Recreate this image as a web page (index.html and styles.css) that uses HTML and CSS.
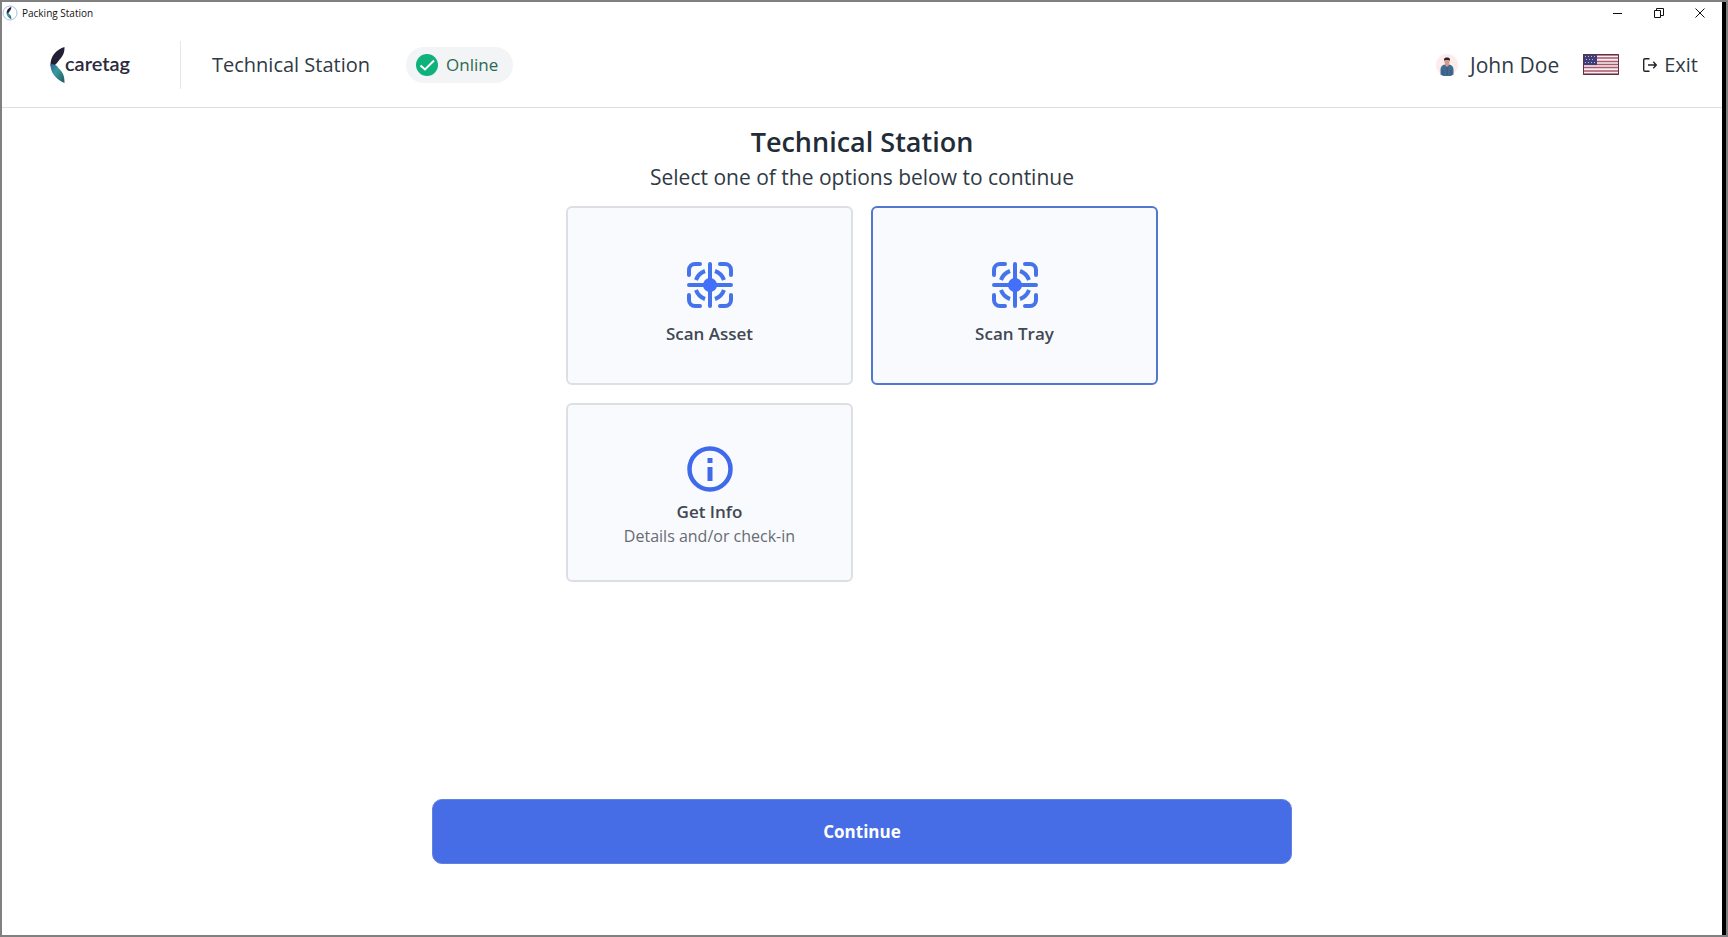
FILE: index.html
```html
<!DOCTYPE html>
<html lang="en">
<head>
    <meta charset="UTF-8">
    <title>Packing Station</title>
    <link rel="stylesheet" href="styles.css">
</head>
<body>
<svg class="defs" aria-hidden="true">
    <defs>
        <linearGradient id="teal" x1="0" y1="0" x2="1" y2="1">
            <stop offset="0" stop-color="#2b5f9e"/>
            <stop offset="0.4" stop-color="#3a9a9c"/>
            <stop offset="1" stop-color="#235a60"/>
        </linearGradient>
        <symbol id="leaf" viewBox="0 0 15 36">
            <path d="M14.500 0C7 2 0 9 .5 19c4 0 6-2 8-5 4-5 6-7 6-14z" fill="#221f35"/>
            <path d="M.5 17c4 0 6 1 8 4 4 4 6 7 6 15C7 33 0 26 .5 17z" fill="url(#teal)"/>
        </symbol>
        <symbol id="scan" viewBox="0 0 46 46">
            <g fill="none" stroke="#4573ea" stroke-width="4" stroke-linecap="round">
                <path d="M2 13V8a6 6 0 0 1 6-6h5M33 2h5a6 6 0 0 1 6 6v5M44 33v5a6 6 0 0 1-6 6h-5M13 44H8a6 6 0 0 1-6-6v-5"/>
                <path d="M23 2v42M2 23h42"/>
            </g>
            <g fill="none" stroke="#4573ea" stroke-width="4">
                <path d="M9 18a15 15 0 0 1 9-9M28 9a15 15 0 0 1 9 9M37 28a15 15 0 0 1-9 9M18 37a15 15 0 0 1-9-9"/>
            </g>
            <circle cx="23" cy="23" r="7" fill="#4270fb"/>
        </symbol>
    </defs>
</svg>

<div id="window">
    <div id="titlebar">
        <svg class="app-icon" viewBox="0 0 16 16">
            <circle cx="8" cy="8" r="7" fill="#fff" stroke="#a9bfdd"/>
            <use href="#leaf" x="4" y="2" width="6" height="12"/>
        </svg>
        <span class="app-name">Packing Station</span>
        <div class="win-buttons">
            <button type="button" aria-label="Minimize"><svg width="10" height="10" viewBox="0 0 10 10"><path d="M0 5.500h9"/></svg></button>
            <button type="button" aria-label="Restore"><svg width="10" height="10" viewBox="0 0 10 10"><path d="M.5 2.500h6v7h-6zM2.500 2.500v-2h7v7h-3"/></svg></button>
            <button type="button" aria-label="Close"><svg width="10" height="10" viewBox="0 0 10 10"><path d="M.5.5l9 9M9.500.5l-9 9"/></svg></button>
        </div>
    </div>

    <header id="header">
        <div class="logo">
            <svg width="15" height="36"><use href="#leaf"/></svg>
            <span>caretag</span>
        </div>
        <div class="station">Technical Station</div>
        <div class="status">
            <svg width="22" height="22" viewBox="0 0 22 22"><circle cx="11" cy="11" r="11" fill="#0fb27b"/><path d="M4.500 11.500l4.500 4 9-9" fill="none" stroke="#fff" stroke-width="2"/></svg>
            <span>Online</span>
        </div>
        <div class="account">
            <div class="user">
                <svg width="22" height="22" viewBox="0 0 22 22">
                    <circle cx="11" cy="11" r="11" fill="#fdecec"/>
                    <path d="M4.500 20.500v-5c0-3 2-4.500 4.500-5h4c2.500.5 4.500 2 4.500 5v5a11 11 0 0 1-13 0z" fill="#426b91"/>
                    <path d="M9 9h4v2l-2 2-2-2z" fill="#d99a86"/>
                    <rect x="8.500" y="4.500" width="5" height="6" rx="2" fill="#d99a86"/>
                    <path d="M8 7V5.500C8 4 9.500 3.500 11 3.500s3 .5 3 2V7l-1-1H9z" fill="#2a2530"/>
                    <path d="M11 13v8M7 16v5M15 16v5" stroke="#2e5072" stroke-width=".7"/>
                </svg>
                <span>John Doe</span>
            </div>
            <button type="button" class="lang" aria-label="Language: English">
                <svg width="36" height="21" viewBox="0 0 36 21">
                    <rect width="36" height="21" fill="#fbeef1"/>
                    <path d="M0 1h36M0 4h36M0 7.500h36M0 10.500h36M0 13.500h36M0 17h36M0 20h36" stroke="#a65a6e" stroke-width="1.500"/>
                    <rect width="14" height="11" fill="#3f3e78"/>
                    <path d="M2 2.500h11M3 5.500h9M2 8.500h11" stroke="#b9b8d6" stroke-dasharray="1 2"/>
                    <path d="M.5.5h35v20H.5z" fill="none" stroke="#5b3345"/>
                </svg>
            </button>
            <a class="exit" href="#">
                <svg width="14" height="14" viewBox="0 0 14 14"><path d="M6.500.7H2a1.300 1.300 0 0 0-1.300 1.300v10A1.300 1.300 0 0 0 2 13.300h4.500M5 7h8M10.300 3.800L13.300 7l-3 3.200"/></svg>
                <span>Exit</span>
            </a>
        </div>
    </header>

    <main id="main">
        <h1>Technical Station</h1>
        <p class="hint">Select one of the options below to continue</p>
        <div class="options">
            <button type="button" class="card" aria-pressed="false">
                <svg class="icon-scan" width="46" height="46"><use href="#scan"/></svg>
                <span class="name">Scan Asset</span>
            </button>
            <button type="button" class="card selected" aria-pressed="true">
                <svg class="icon-scan" width="46" height="46"><use href="#scan"/></svg>
                <span class="name">Scan Tray</span>
            </button>
            <button type="button" class="card" aria-pressed="false">
                <svg class="icon-info" width="46" height="46" viewBox="0 0 46 46">
                    <circle cx="23" cy="23" r="20.500" fill="none" stroke="#3f6aec" stroke-width="4.500"/>
                    <path d="M20.500 12h5v5h-5zM20.500 21h5v14h-5z" fill="#3f6aec"/>
                </svg>
                <span class="name">Get Info</span>
                <span class="desc">Details and/or check-in</span>
            </button>
        </div>
        <button type="button" class="continue">Continue</button>
    </main>
</div>

<script>
    var aCard = document.getElementsByClassName('card');
    for (var i = 0; i < aCard.length; i++) {
        aCard[i].onclick = function () {
            for (var j = 0; j < aCard.length; j++) {
                aCard[j].className = 'card';
                aCard[j].setAttribute('aria-pressed', 'false');
            }
            this.className = 'card selected';
            this.setAttribute('aria-pressed', 'true');
        };
    }
</script>
</body>
</html>
```
FILE: styles.css
```css
*{
    margin: 0;
    padding: 0;
    box-sizing: border-box;
}
body{
    background-color: #808080;
    font-family: "Open Sans", "Noto Sans", sans-serif;
    color: #2f3a45;
}
button{
    font-family: inherit;
    color: inherit;
    background: none;
    border: none;
    cursor: pointer;
}
svg{
    display: block;
    flex: none;
}
.defs{
    position: absolute;
    width: 0;
    height: 0;
}
#window{
    display: flex;
    flex-direction: column;
    min-height: 100vh;
    border: 2px solid #808080;
    background-color: #fff;
    box-shadow: inset -4px 0 0 #000;
    padding-right: 4px;
}

/* title bar */
#titlebar{
    display: flex;
    align-items: center;
    height: 22px;
    padding-right: 2px;
}
.app-icon{
    width: 16px;
    height: 16px;
}
.app-name{
    margin-left: 4px;
    font-size: 10px;
    color: #111;
}
.win-buttons{
    display: flex;
    margin-left: auto;
}
.win-buttons button{
    display: flex;
    align-items: center;
    justify-content: center;
    width: 41px;
    height: 20px;
}
.win-buttons path{
    fill: none;
    stroke: #111;
}

/* header */
#header{
    display: flex;
    align-items: center;
    height: 84px;
    padding: 0 24px 2px 48px;
    border-bottom: 1px solid #dcdee0;
    font-size: 20px;
}
.logo{
    display: flex;
    align-items: center;
    width: 131px;
    height: 48px;
    border-right: 1px solid #e5e7ea;
}
.logo span{
    font-family: Lato, sans-serif;
    font-size: 20px;
    font-weight: 600;
    line-height: 24px;
    padding-bottom: 4px;
    color: #2b293d;
}
.station{
    margin-left: 31px;
}
.status{
    display: flex;
    align-items: center;
    gap: 8px;
    height: 36px;
    margin-left: 36px;
    padding: 0 15px 0 10px;
    border-radius: 18px;
    background-color: #f2f4f6;
    color: #2b6a50;
    font-size: 17px;
}
.account{
    display: flex;
    align-items: center;
    gap: 24px;
    margin-left: auto;
}
.user{
    display: flex;
    align-items: center;
    gap: 12px;
    font-size: 21px;
}
.exit{
    display: flex;
    align-items: center;
    gap: 7px;
    color: inherit;
    text-decoration: none;
}
.exit path{
    fill: none;
    stroke: #1d232a;
    stroke-width: 1.4;
}

/* content */
#main{
    display: flex;
    flex-direction: column;
    align-items: center;
    flex: 1;
    padding: 15px 0 71px;
}
h1{
    font-size: 27px;
    line-height: 38px;
    font-weight: 600;
    color: #222c38;
}
.hint{
    font-size: 21px;
    line-height: 32px;
}
.options{
    display: grid;
    grid-template-columns: 287px 287px;
    gap: 18px;
    margin-top: 13px;
}
.card{
    display: flex;
    flex-direction: column;
    align-items: center;
    justify-content: center;
    height: 179px;
    padding-top: 8px;
    border: 2px solid #dcdfe4;
    border-radius: 6px;
    background-color: #f9fafd;
    font-size: 16px;
    line-height: 24px;
}
.card.selected{
    border-color: #5277cf;
}
.icon-scan{
    margin: 8px 0 14px;
}
.icon-info{
    margin-bottom: 8px;
}
.name{
    font-size: 17px;
    font-weight: 600;
    color: #414852;
}
.desc{
    color: #666c74;
}
.continue{
    width: 50%;
    height: 65px;
    margin-top: auto;
    border: 1px solid #6283dc;
    border-radius: 10px;
    background-color: #466de5;
    color: #fff;
    font-size: 17px;
    font-weight: 700;
}
```
